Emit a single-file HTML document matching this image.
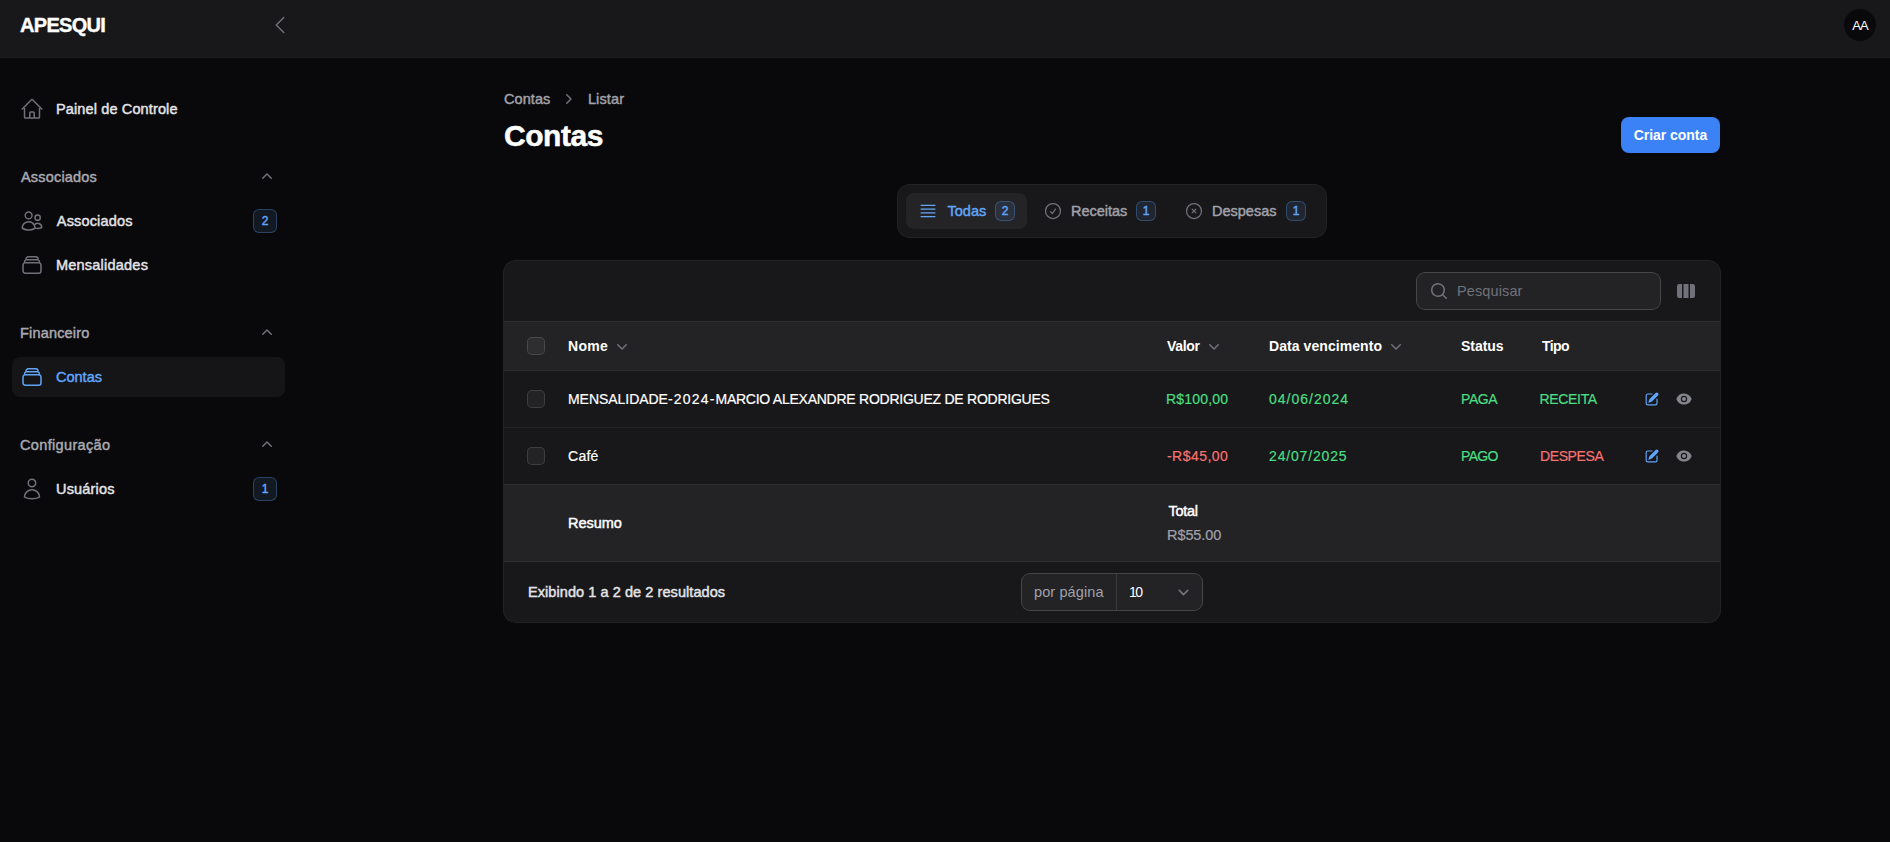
<!DOCTYPE html>
<html lang="pt-BR">
<head>
<meta charset="utf-8">
<title>Contas - APESQUI</title>
<style>
*{box-sizing:border-box;margin:0;padding:0}
html,body{width:1890px;height:842px;overflow:hidden;background:#09090b}
body{font-family:"Liberation Sans",sans-serif;font-size:14px;line-height:20px;color:#fff;position:relative;-webkit-font-smoothing:antialiased}
svg{display:block;flex:none}
.o{fill:none;stroke:currentColor;stroke-width:1.5;stroke-linecap:round;stroke-linejoin:round}
.f{fill:currentColor}
.t{display:inline-block;white-space:nowrap}
.md{-webkit-text-stroke:.45px currentColor}
.lg{font-size:14.5px}
.sb{font-weight:700}

/* topbar */
#topbar{position:absolute;left:0;top:0;width:1890px;height:57px;background:#18181b;box-shadow:0 1px 0 rgba(255,255,255,.08)}
#brand{position:absolute;left:20px;top:15px;-webkit-text-stroke:.4px #fff;font-size:20px;line-height:20px;font-weight:700;color:#fff}
#collapse{position:absolute;left:268px;top:13px;width:24px;height:24px;color:#71717a}
#avatar{position:absolute;left:1844px;top:9px;width:32px;height:32px;border-radius:50%;background:#09090b;display:flex;align-items:center;justify-content:center;font-size:13px;line-height:16px;color:#fff;padding-top:1px}

/* sidebar */
#nav{position:absolute;left:12px;top:89px;width:273px}
#nav ul{list-style:none}
.grp{margin-bottom:28px}
.grp-h{height:40px;padding:8px;display:flex;align-items:center;justify-content:space-between;color:#a9a9b1}
.grp-h svg{color:#71717a;width:20px;height:20px}
.item{height:40px;padding:8px;display:flex;align-items:center;border-radius:8px;color:#e4e4e7;margin-top:4px}
.item.first{margin-top:0}
.item svg{width:24px;height:24px;color:#71717a;margin-right:12px}
.item .lbl{flex:1}
.item.active{background:#151517;color:#60a5fa}
.item.active svg{color:#60a5fa}
.badge{display:inline-flex;align-items:center;justify-content:center;min-width:24px;height:24px;padding:0 8px;border-radius:6px;background:rgba(96,165,250,.1);box-shadow:inset 0 0 0 1px rgba(96,165,250,.3);color:#60a5fa;font-size:12px;line-height:16px}
.badge.sm{min-width:20px;height:20px;padding:0 6px}

/* page header */
#crumbs{position:absolute;left:504px;top:89px;height:20px;display:flex;align-items:center;color:#a1a1aa}
#crumbs svg{width:20px;height:20px;margin:0 8px;color:#71717a}
#h1{position:absolute;left:504px;top:118px;-webkit-text-stroke:.5px #fff;font-size:30px;line-height:36px;font-weight:700;color:#fff}
#create{position:absolute;left:1621px;top:117px;width:99px;height:36px;border-radius:8px;background:#3b82f6;color:#fff;display:flex;align-items:center;justify-content:center;font-weight:700;box-shadow:0 1px 2px rgba(0,0,0,.05)}

/* tabs */
#tabs{position:absolute;left:898px;top:185px;width:428px;height:52px;padding:8px;border-radius:12px;background:#18181b;box-shadow:0 0 0 1px rgba(255,255,255,.1);display:flex;gap:4px}
.tab{height:36px;padding:0 12px;border-radius:8px;display:flex;align-items:center;gap:8px;color:#a1a1aa;flex:none}
.tab .badge{margin-left:auto}
#tb1{width:121px}#tb2{width:137px}#tb3{width:146px}
.tab svg{width:20px;height:20px;color:#71717a}
.tab.active{background:#242427;color:#60a5fa}
.tab.active svg{color:#60a5fa}

/* card */
#card{position:absolute;left:504px;top:261px;width:1216px;height:361px;border-radius:12px;background:#18181b;box-shadow:0 0 0 1px rgba(255,255,255,.1);overflow:hidden}
#toolbar{position:absolute;left:0;top:0;width:1216px;height:61px;border-bottom:1px solid rgba(255,255,255,.1)}
#search{position:absolute;left:913px;top:12px;width:243px;height:36px;border-radius:8px;background:rgba(255,255,255,.05);box-shadow:0 0 0 1px rgba(255,255,255,.2);display:flex;align-items:center;padding-left:12px;color:#71717a}
#search svg{width:20px;height:20px;margin-right:8px}
#cols{position:absolute;left:1172px;top:20px;width:20px;height:20px;color:#71717a}
table{position:absolute;left:0;top:61px;width:1216px;border-collapse:collapse;table-layout:fixed}
th,td{text-align:left;vertical-align:middle;padding:0;font-weight:400;white-space:nowrap}
thead tr{height:48px;background:rgba(255,255,255,.05)}
tbody td{-webkit-text-stroke:.2px currentColor}
tbody tr{height:57px;border-top:1px solid rgba(255,255,255,.05)}
tbody tr:first-child{border-top-color:rgba(255,255,255,.09)}
tbody tr.sum{height:77px;background:rgba(255,255,255,.05)}
th .h{display:flex;align-items:center;gap:4px;font-weight:700;color:#fff}
th .h svg{width:20px;height:20px;color:#71717a}
.cb{display:block;width:16px;height:16px;border-radius:4px;background:rgba(255,255,255,.05);box-shadow:0 0 0 1px rgba(255,255,255,.17);margin-left:24px}
.g{color:#4ade80}.r{color:#f87171}
.acts{display:flex;align-items:center;gap:16px;padding-left:4px}
.acts svg{width:16px;height:16px}
.acts .e{color:#60a5fa}.acts .v{color:#85858d}
#foot{position:absolute;left:0;top:300px;width:1216px;height:61px;border-top:1px solid rgba(255,255,255,.1)}
#showing{position:absolute;left:24px;top:20px;color:#e4e4e7}
#perpage{position:absolute;left:518px;top:12px;width:180px;height:36px;border-radius:8px;background:rgba(255,255,255,.05);box-shadow:0 0 0 1px rgba(255,255,255,.2);display:flex;align-items:center}
#perpage .pre{height:36px;padding:0 12px;display:flex;align-items:center;color:#a1a1aa;border-right:1px solid rgba(255,255,255,.1);width:95px}
#perpage .sel{flex:1;height:36px;padding-left:12px;display:flex;align-items:center;justify-content:space-between;color:#fff}
#perpage .sel svg{width:21px;height:21px;color:#74747e;margin-right:8px}
#t-assoc{margin-left:.8px}#t-tab1{margin-left:1.5px}#t-r1-tipo{margin-left:-1.5px}#t-r1-valor{margin-left:-1px}#t-total{margin-left:1.4px}#t-totalv{margin-left:0}#t-g1{margin-left:1px}#t-h-tipo{margin-left:1px}#t-r2-tipo{margin-left:-1px}#t-c2{margin-left:1.5px}
/*LS-START*/
#t-brand{letter-spacing:-0.70px}
#t-aa{letter-spacing:-1.00px}
#t-painel{letter-spacing:0.13px}
#t-g1{letter-spacing:0.18px}
#t-assoc{letter-spacing:0.16px}
#t-mens{letter-spacing:0.22px}
#t-g2{letter-spacing:0.18px}
#t-g3{letter-spacing:0.35px}
#t-usu{letter-spacing:0.17px}
#t-c1{letter-spacing:0.08px}
#t-c2{letter-spacing:0.12px}
#t-h1{letter-spacing:-0.44px}
#t-create{letter-spacing:-0.05px}
#t-tab2{letter-spacing:-0.03px}
#t-search{letter-spacing:0.12px}
#t-h-nome{letter-spacing:0.27px}
#t-h-valor{letter-spacing:-0.30px}
#t-h-data{letter-spacing:0.07px}
#t-h-status{letter-spacing:-0.04px}
#t-h-tipo{letter-spacing:-0.60px}
#t-r1-valor{letter-spacing:0.20px}
#t-r1-data{letter-spacing:1.00px}
#t-r1-status{letter-spacing:-0.40px}
#t-r1-tipo{letter-spacing:-0.33px}
#t-r2-nome{letter-spacing:0.27px}
#t-r2-valor{letter-spacing:0.46px}
#t-r2-data{letter-spacing:0.84px}
#t-r2-status{letter-spacing:-0.67px}
#t-r2-tipo{letter-spacing:-0.40px}
#t-resumo{letter-spacing:-0.04px}
#t-total{letter-spacing:-0.25px}
#t-totalv{letter-spacing:-0.08px}
#t-showing{letter-spacing:0.07px}
#t-pp{letter-spacing:0.11px}
#t-10{letter-spacing:-1.50px}
#t-r1-na{letter-spacing:-0.04px}
#t-r1-nc{letter-spacing:-0.25px}
#t-r1-nb{letter-spacing:1.18px}
/*LS-END*/
</style>
</head>
<body>

<header id="topbar">
  <div id="brand"><span class="t" id="t-brand">APESQUI</span></div>
  <svg id="collapse" viewBox="0 0 24 24"><path class="o" d="M15.75 19.5 8.25 12l7.5-7.5"/></svg>
  <div id="avatar"><span class="t" id="t-aa">AA</span></div>
</header>

<nav id="nav">
  <ul class="grp">
    <li class="item first">
      <svg viewBox="0 0 24 24"><path class="o" d="m2.25 12 8.954-8.955c.44-.439 1.152-.439 1.591 0L21.75 12M4.5 9.75v10.125c0 .621.504 1.125 1.125 1.125H9.75v-4.875c0-.621.504-1.125 1.125-1.125h2.25c.621 0 1.125.504 1.125 1.125V21h4.125c.621 0 1.125-.504 1.125-1.125V9.75M8.25 21h8.25"/></svg>
      <span class="lbl"><span class="t md lg" id="t-painel">Painel de Controle</span></span>
    </li>
  </ul>
  <ul class="grp">
    <li class="grp-h"><span class="t md lg" id="t-g1">Associados</span>
      <svg viewBox="0 0 20 20"><path class="f" d="M9.47 6.47a.75.75 0 0 1 1.06 0l4.25 4.25a.75.75 0 1 1-1.06 1.06L10 8.06l-3.72 3.72a.75.75 0 0 1-1.06-1.06l4.25-4.25Z"/></svg></li>
    <li class="item">
      <svg viewBox="0 0 24 24"><path class="o" d="M15 19.128a9.38 9.38 0 0 0 2.625.372 9.337 9.337 0 0 0 4.121-.952 4.125 4.125 0 0 0-7.533-2.493M15 19.128v-.003c0-1.113-.285-2.16-.786-3.07M15 19.128v.106A12.318 12.318 0 0 1 8.624 21c-2.331 0-4.512-.645-6.374-1.766l-.001-.109a6.375 6.375 0 0 1 11.964-3.07M12 6.375a3.375 3.375 0 1 1-6.75 0 3.375 3.375 0 0 1 6.75 0Zm8.25 2.25a2.625 2.625 0 1 1-5.25 0 2.625 2.625 0 0 1 5.25 0Z"/></svg>
      <span class="lbl"><span class="t md lg" id="t-assoc">Associados</span></span>
      <span class="badge"><span class="t md">2</span></span>
    </li>
    <li class="item">
      <svg viewBox="0 0 24 24"><path class="o" d="M6 6.878V6a2.25 2.25 0 0 1 2.25-2.25h7.5A2.25 2.25 0 0 1 18 6v.878m-12 0c.235-.083.487-.128.75-.128h10.5c.263 0 .515.045.75.128m-12 0A2.25 2.25 0 0 0 4.5 9v.878m13.5-3A2.25 2.25 0 0 1 19.5 9v.878m0 0a2.246 2.246 0 0 0-.75-.128H5.25c-.263 0-.515.045-.75.128m15 0A2.25 2.25 0 0 1 21 12v6a2.25 2.25 0 0 1-2.25 2.25H5.25A2.25 2.25 0 0 1 3 18v-6c0-.98.626-1.813 1.5-2.122"/></svg>
      <span class="lbl"><span class="t md lg" id="t-mens">Mensalidades</span></span>
    </li>
  </ul>
  <ul class="grp">
    <li class="grp-h"><span class="t md lg" id="t-g2">Financeiro</span>
      <svg viewBox="0 0 20 20"><path class="f" d="M9.47 6.47a.75.75 0 0 1 1.06 0l4.25 4.25a.75.75 0 1 1-1.06 1.06L10 8.06l-3.72 3.72a.75.75 0 0 1-1.06-1.06l4.25-4.25Z"/></svg></li>
    <li class="item active">
      <svg viewBox="0 0 24 24"><path class="o" d="M6 6.878V6a2.25 2.25 0 0 1 2.25-2.25h7.5A2.25 2.25 0 0 1 18 6v.878m-12 0c.235-.083.487-.128.75-.128h10.5c.263 0 .515.045.75.128m-12 0A2.25 2.25 0 0 0 4.5 9v.878m13.5-3A2.25 2.25 0 0 1 19.5 9v.878m0 0a2.246 2.246 0 0 0-.75-.128H5.25c-.263 0-.515.045-.75.128m15 0A2.25 2.25 0 0 1 21 12v6a2.25 2.25 0 0 1-2.25 2.25H5.25A2.25 2.25 0 0 1 3 18v-6c0-.98.626-1.813 1.5-2.122"/></svg>
      <span class="lbl"><span class="t md lg" id="t-contas">Contas</span></span>
    </li>
  </ul>
  <ul class="grp">
    <li class="grp-h"><span class="t md lg" id="t-g3">Configuração</span>
      <svg viewBox="0 0 20 20"><path class="f" d="M9.47 6.47a.75.75 0 0 1 1.06 0l4.25 4.25a.75.75 0 1 1-1.06 1.06L10 8.06l-3.72 3.72a.75.75 0 0 1-1.06-1.06l4.25-4.25Z"/></svg></li>
    <li class="item">
      <svg viewBox="0 0 24 24"><path class="o" d="M15.75 6a3.75 3.75 0 1 1-7.5 0 3.75 3.75 0 0 1 7.5 0ZM4.501 20.118a7.5 7.5 0 0 1 14.998 0A17.933 17.933 0 0 1 12 21.75c-2.676 0-5.216-.584-7.499-1.632Z"/></svg>
      <span class="lbl"><span class="t md lg" id="t-usu">Usuários</span></span>
      <span class="badge"><span class="t md">1</span></span>
    </li>
  </ul>
</nav>

<main>
  <div id="crumbs">
    <span class="t md lg" id="t-c1">Contas</span>
    <svg viewBox="0 0 20 20"><path class="f" d="M8.22 5.22a.75.75 0 0 1 1.06 0l4.25 4.25a.75.75 0 0 1 0 1.06l-4.25 4.25a.75.75 0 0 1-1.06-1.06L11.94 10 8.22 6.28a.75.75 0 0 1 0-1.06Z"/></svg>
    <span class="t md lg" id="t-c2">Listar</span>
  </div>
  <h1 id="h1"><span class="t" id="t-h1">Contas</span></h1>
  <div id="create"><span class="t" id="t-create">Criar conta</span></div>

  <div id="tabs">
    <div class="tab active" id="tb1">
      <svg viewBox="0 0 24 24"><path class="o" d="M3.75 5.25h16.5m-16.5 4.5h16.5m-16.5 4.5h16.5m-16.5 4.5h16.5"/></svg>
      <span class="t md lg" id="t-tab1">Todas</span>
      <span class="badge sm"><span class="t md">2</span></span>
    </div>
    <div class="tab" id="tb2">
      <svg viewBox="0 0 24 24"><path class="o" d="M9 12.75 11.25 15 15 9.75M21 12a9 9 0 1 1-18 0 9 9 0 0 1 18 0Z"/></svg>
      <span class="t md lg" id="t-tab2">Receitas</span>
      <span class="badge sm"><span class="t md">1</span></span>
    </div>
    <div class="tab" id="tb3">
      <svg viewBox="0 0 24 24"><path class="o" d="m9.75 9.75 4.5 4.5m0-4.5-4.5 4.5M21 12a9 9 0 1 1-18 0 9 9 0 0 1 18 0Z"/></svg>
      <span class="t md lg" id="t-tab3">Despesas</span>
      <span class="badge sm"><span class="t md">1</span></span>
    </div>
  </div>

  <section id="card">
    <div id="toolbar">
      <div id="search">
        <svg viewBox="0 0 20 20"><path class="f" fill-rule="evenodd" d="M9 3.5a5.5 5.5 0 100 11 5.5 5.5 0 000-11zM2 9a7 7 0 1112.452 4.391l3.328 3.329a.75.75 0 11-1.06 1.06l-3.329-3.328A7 7 0 012 9z"/></svg>
        <span class="t lg" id="t-search">Pesquisar</span>
      </div>
      <svg id="cols" viewBox="0 0 20 20"><path class="f" d="M14 17h2.75A2.25 2.25 0 0 0 19 14.75v-9.5A2.25 2.25 0 0 0 16.75 3H14v14ZM12.5 3h-5v14h5V3ZM3.25 3H6v14H3.25A2.25 2.25 0 0 1 1 14.75v-9.5A2.25 2.25 0 0 1 3.25 3Z"/></svg>
    </div>
    <table>
      <colgroup><col style="width:64px"><col style="width:599px"><col style="width:102px"><col style="width:192px"><col style="width:80px"><col style="width:99px"><col style="width:80px"></colgroup>
      <thead>
        <tr>
          <th><span class="cb"></span></th>
          <th><span class="h"><span class="t" id="t-h-nome">Nome</span><svg viewBox="0 0 20 20"><path class="f" d="M5.22 8.22a.75.75 0 0 1 1.06 0L10 11.94l3.72-3.72a.75.75 0 1 1 1.06 1.06l-4.25 4.25a.75.75 0 0 1-1.06 0L5.22 9.28a.75.75 0 0 1 0-1.06Z"/></svg></span></th>
          <th><span class="h"><span class="t" id="t-h-valor">Valor</span><svg viewBox="0 0 20 20"><path class="f" d="M5.22 8.22a.75.75 0 0 1 1.06 0L10 11.94l3.72-3.72a.75.75 0 1 1 1.06 1.06l-4.25 4.25a.75.75 0 0 1-1.06 0L5.22 9.28a.75.75 0 0 1 0-1.06Z"/></svg></span></th>
          <th><span class="h"><span class="t" id="t-h-data">Data vencimento</span><svg viewBox="0 0 20 20"><path class="f" d="M5.22 8.22a.75.75 0 0 1 1.06 0L10 11.94l3.72-3.72a.75.75 0 1 1 1.06 1.06l-4.25 4.25a.75.75 0 0 1-1.06 0L5.22 9.28a.75.75 0 0 1 0-1.06Z"/></svg></span></th>
          <th><span class="h"><span class="t" id="t-h-status">Status</span></span></th>
          <th><span class="h"><span class="t" id="t-h-tipo">Tipo</span></span></th>
          <th></th>
        </tr>
      </thead>
      <tbody>
        <tr>
          <td><span class="cb"></span></td>
          <td><span class="t" id="t-r1-na">MENSALIDADE</span><span class="t" id="t-r1-nb">-2024-</span><span class="t" id="t-r1-nc">MARCIO ALEXANDRE RODRIGUEZ DE RODRIGUES</span></td>
          <td class="g"><span class="t" id="t-r1-valor">R$100,00</span></td>
          <td class="g"><span class="t" id="t-r1-data">04/06/2024</span></td>
          <td class="g"><span class="t" id="t-r1-status">PAGA</span></td>
          <td class="g"><span class="t" id="t-r1-tipo">RECEITA</span></td>
          <td><span class="acts">
            <svg class="e" viewBox="0 0 20 20"><path class="f" d="m5.433 13.917 1.262-3.155A4 4 0 0 1 7.58 9.42l6.92-6.918a2.121 2.121 0 0 1 3 3l-6.92 6.918c-.383.383-.84.685-1.343.886l-3.154 1.262a.5.5 0 0 1-.65-.65Z"/><path class="f" d="M3.5 5.75c0-.69.56-1.25 1.25-1.25H10A.75.75 0 0 0 10 3H4.75A2.75 2.75 0 0 0 2 5.75v9.5A2.75 2.75 0 0 0 4.75 18h9.5A2.75 2.75 0 0 0 17 15.25V10a.75.75 0 0 0-1.5 0v5.25c0 .69-.56 1.25-1.25 1.25h-9.5c-.69 0-1.25-.56-1.25-1.25v-9.5Z"/></svg>
            <svg class="v" viewBox="0 0 20 20"><path class="f" d="M10 12.5a2.5 2.5 0 1 0 0-5 2.5 2.5 0 0 0 0 5Z"/><path class="f" fill-rule="evenodd" d="M.664 10.59a1.651 1.651 0 0 1 0-1.186A10.004 10.004 0 0 1 10 3c4.257 0 7.893 2.66 9.336 6.41.147.381.146.804 0 1.186A10.004 10.004 0 0 1 10 17c-4.257 0-7.893-2.66-9.336-6.41ZM14 10a4 4 0 1 1-8 0 4 4 0 0 1 8 0Z"/></svg>
          </span></td>
        </tr>
        <tr>
          <td><span class="cb"></span></td>
          <td><span class="t" id="t-r2-nome">Café</span></td>
          <td class="r"><span class="t" id="t-r2-valor">-R$45,00</span></td>
          <td class="g"><span class="t" id="t-r2-data">24/07/2025</span></td>
          <td class="g"><span class="t" id="t-r2-status">PAGO</span></td>
          <td class="r"><span class="t" id="t-r2-tipo">DESPESA</span></td>
          <td><span class="acts">
            <svg class="e" viewBox="0 0 20 20"><path class="f" d="m5.433 13.917 1.262-3.155A4 4 0 0 1 7.58 9.42l6.92-6.918a2.121 2.121 0 0 1 3 3l-6.92 6.918c-.383.383-.84.685-1.343.886l-3.154 1.262a.5.5 0 0 1-.65-.65Z"/><path class="f" d="M3.5 5.75c0-.69.56-1.25 1.25-1.25H10A.75.75 0 0 0 10 3H4.75A2.75 2.75 0 0 0 2 5.75v9.5A2.75 2.75 0 0 0 4.75 18h9.5A2.75 2.75 0 0 0 17 15.25V10a.75.75 0 0 0-1.5 0v5.25c0 .69-.56 1.25-1.25 1.25h-9.5c-.69 0-1.25-.56-1.25-1.25v-9.5Z"/></svg>
            <svg class="v" viewBox="0 0 20 20"><path class="f" d="M10 12.5a2.5 2.5 0 1 0 0-5 2.5 2.5 0 0 0 0 5Z"/><path class="f" fill-rule="evenodd" d="M.664 10.59a1.651 1.651 0 0 1 0-1.186A10.004 10.004 0 0 1 10 3c4.257 0 7.893 2.66 9.336 6.41.147.381.146.804 0 1.186A10.004 10.004 0 0 1 10 17c-4.257 0-7.893-2.66-9.336-6.41ZM14 10a4 4 0 1 1-8 0 4 4 0 0 1 8 0Z"/></svg>
          </span></td>
        </tr>
        <tr class="sum">
          <td></td>
          <td><span class="t md lg" id="t-resumo">Resumo</span></td>
          <td colspan="5" style="line-height:24px"><span class="t md lg" id="t-total">Total</span><br><span class="t lg" id="t-totalv" style="color:#a1a1aa">R$55.00</span></td>
        </tr>
      </tbody>
    </table>
    <div id="foot">
      <span class="t md" id="showing"><span class="t lg" id="t-showing">Exibindo 1 a 2 de 2 resultados</span></span>
      <div id="perpage">
        <span class="pre"><span class="t lg" id="t-pp">por página</span></span>
        <span class="sel"><span class="t" id="t-10">10</span>
          <svg viewBox="0 0 20 20"><path class="o" d="M6 8l4 4 4-4"/></svg></span>
      </div>
    </div>
  </section>
</main>
</body>
</html>
